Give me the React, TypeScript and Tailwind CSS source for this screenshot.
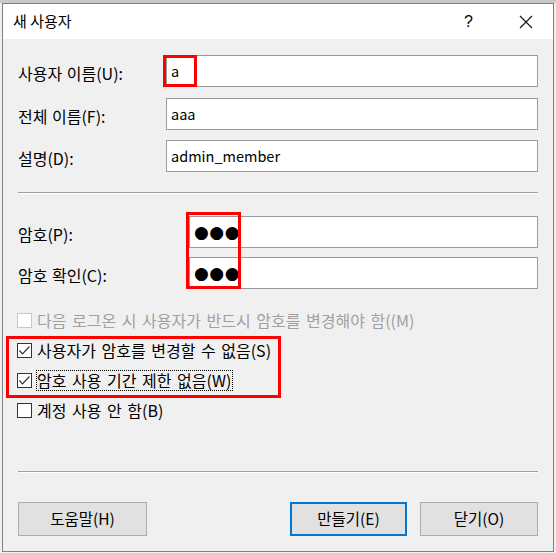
import React from 'react'

const FONT = "font-['Noto_Sans_CJK_KR',sans-serif]"

function Check({ checked, disabled }: { checked?: boolean; disabled?: boolean }) {
  return (
    <span
      className={`w-[15px] h-[15px] border bg-white flex items-center justify-center shrink-0 ${
        disabled ? 'border-[#c8c8c8]' : 'border-[#333333]'
      }`}
    >
      {checked && (
        <svg width="13" height="13" viewBox="0 0 13 13">
          <path d="M1.5 6.5 L4.5 9.8 L11.5 2.5" fill="none" stroke="#333" strokeWidth="1.2" />
        </svg>
      )}
    </span>
  )
}

function Field({ label, value, labelWidth }: { label: string; value: React.ReactNode; labelWidth: string }) {
  return (
    <div className="flex items-center h-[32px]">
      <div className={`${labelWidth} text-[16px] text-black pt-[3px] [word-spacing:1px]`}>{label}</div>
      <div className="flex-1 h-full bg-white border border-[#9a9a9a] flex items-center px-[4px] text-[14.5px] text-black">
        {value}
      </div>
    </div>
  )
}

function Dots() {
  return <span className="font-['DejaVu_Sans',sans-serif] text-[17px] leading-none text-black tracking-[0.5px]">●●●</span>
}

function Sep() {
  return <div className="h-[2px] border-t border-[#a0a0a0] border-b border-b-white" />
}

export default function App() {
  return (
    <div className={`relative w-[556px] h-[553px] bg-[#f0f0f0] overflow-hidden ${FONT}`}>
      <div className="h-[3px] bg-[#c9c9c9]" />
      <div className="ml-[2px] w-[552px] h-[549px] border border-[#808080] flex flex-col">
        {/* title bar */}
        <div className="h-[35px] bg-white flex items-center shrink-0">
          <span className="pl-[10px] text-[15px] text-black">새 사용자</span>
          <span className="ml-auto text-[16px] text-black font-['Liberation_Sans',sans-serif]">?</span>
          <svg className="ml-[46px] mr-[20px]" width="14" height="14" viewBox="0 0 14 14">
            <path d="M1 1 L13 13 M13 1 L1 13" stroke="#111" strokeWidth="1.1" />
          </svg>
        </div>

        {/* body */}
        <div className="flex-1 bg-[#f0f0f0] px-[15px] pt-[16px]">
          <Field label="사용자 이름(U):" value="a" labelWidth="w-[148px]" />
          <div className="mt-[11px]">
            <Field label="전체 이름(F):" value="aaa" labelWidth="w-[148px]" />
          </div>
          <div className="mt-[10px]">
            <Field label="설명(D):" value="admin_member" labelWidth="w-[148px]" />
          </div>

          <div className="mt-[20px]">
            <Sep />
          </div>

          <div className="mt-[22px]">
            <Field label="암호(P):" value={<Dots />} labelWidth="w-[171px]" />
          </div>
          <div className="mt-[9px]">
            <Field label="암호 확인(C):" value={<Dots />} labelWidth="w-[171px]" />
          </div>

          <div className="mt-[20px] flex flex-col gap-[8px] -ml-[1px] text-[16px] [word-spacing:2px]">
            <div className="h-[22px] flex items-center gap-[5px]">
              <Check disabled />
              <span className="text-[#a0a0a0]">다음 로그온 시 사용자가 반드시 암호를 변경해야 함((M)</span>
            </div>
            <div className="h-[22px] flex items-center gap-[5px]">
              <Check checked />
              <span className="text-black">사용자가 암호를 변경할 수 없음(S)</span>
            </div>
            <div className="h-[22px] flex items-center gap-[4px]">
              <Check checked />
              <span className="text-black border border-dotted border-black h-[21px] flex items-center pr-[1px]">
                암호 사용 기간 제한 없음(W)
              </span>
            </div>
            <div className="h-[22px] flex items-center gap-[5px]">
              <Check />
              <span className="text-black">계정 사용 안 함(B)</span>
            </div>
          </div>

          <div className="mt-[50px]">
            <Sep />
          </div>

          <div className="mt-[29px] flex justify-between text-[15.5px] text-black">
            <button className="w-[129px] h-[34px] bg-[#e1e1e1] border border-[#adadad]">도움말(H)</button>
            <div className="flex gap-[13px]">
              <button className="w-[117px] h-[34px] bg-[#e1e1e1] border-2 border-[#0078d7]">만들기(E)</button>
              <button className="w-[118px] h-[34px] bg-[#e1e1e1] border border-[#adadad]">닫기(O)</button>
            </div>
          </div>
        </div>
      </div>

      {/* red annotation boxes */}
      <div className="absolute left-[163px] top-[55px] w-[34px] h-[32px] border-[3px] border-[#ff0000]" />
      <div className="absolute left-[186px] top-[212px] w-[55px] h-[77px] border-[3px] border-[#ff0000]" />
      <div className="absolute left-[6px] top-[336px] w-[275px] h-[62px] border-[3px] border-[#ff0000]" />
    </div>
  )
}
